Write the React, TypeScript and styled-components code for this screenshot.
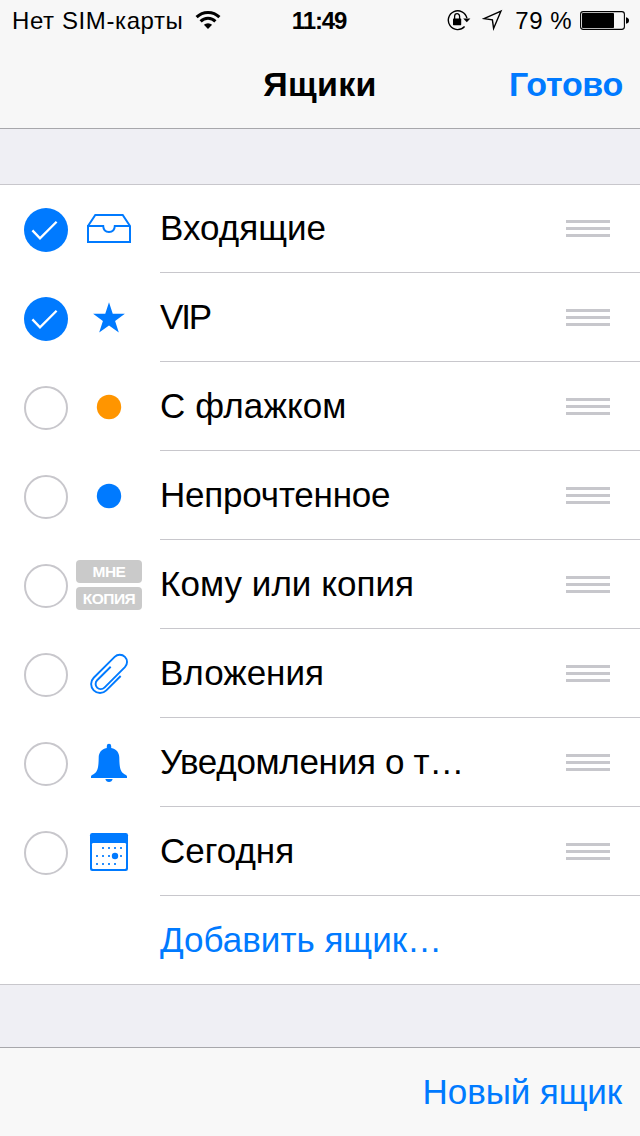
import React from 'react';
import styled, { createGlobalStyle, css } from 'styled-components';

const BLUE = '#007aff';
const LINE = '#c8c7cc';

const GlobalStyle = createGlobalStyle`
  body {
    margin: 0;
    background: #efeff4;
    font-family: 'Liberation Sans', Arial, sans-serif;
    color: #000;
  }
  * { box-sizing: border-box; }
  svg { display: block; flex: none; }
`;

const Screen = styled.div`
  width: 640px;
  height: 1136px;
  display: flex;
  flex-direction: column;
  overflow: hidden;
  background: #efeff4;
`;

const Header = styled.header`
  height: 129px;
  flex: none;
  background: #f7f7f7;
  border-bottom: 1px solid #a7a7ab;
`;

const ThreeColumns = css`
  display: grid;
  grid-template-columns: 1fr auto 1fr;
`;

const StatusBar = styled.div`
  ${ThreeColumns}
  height: 40px;
  padding: 0 11px 0 12px;
  font-size: 24px;
  line-height: 41px;
`;

const StatusGroup = styled.div<{ $end?: boolean }>`
  display: flex;
  align-items: center;
  height: 40px;
  justify-content: ${p => (p.$end ? 'flex-end' : 'flex-start')};
`;

const Text = styled.span<{ $track?: number; $bold?: boolean }>`
  white-space: nowrap;
  letter-spacing: ${p => p.$track ?? 0}px;
  font-weight: ${p => (p.$bold ? 700 : 400)};
`;

const Clock = styled(Text)`
  margin-right: 3px;
`;

const NavBar = styled.div`
  ${ThreeColumns}
  height: 88px;
  padding: 0 17px;
  font-size: 34px;
  line-height: 89px;
`;

const NavAction = styled.button`
  grid-column: 3;
  justify-self: end;
  padding: 0;
  border: 0;
  background: none;
  font: inherit;
  color: ${BLUE};
`;

const NavTitle = styled.h1`
  grid-column: 2;
  margin: 0;
  font: inherit;
`;

const GroupGap = styled.div`
  height: 56px;
  flex: none;
  border-bottom: 1px solid ${LINE};
`;

const List = styled.ul`
  margin: 0;
  padding: 0;
  list-style: none;
  background: #fff;
  border-bottom: 1px solid ${LINE};
`;

const Row = styled.li`
  display: flex;
  height: 89px;
  padding-left: 24px;
  &:first-child { margin-top: -1px; }
  &:last-child { height: 88px; }
`;

const Check = styled.span<{ $on?: boolean }>`
  width: 44px;
  height: 44px;
  margin-top: 24px;
  flex: none;
  border-radius: 50%;
  background: ${p => (p.$on ? BLUE : 'transparent')};
  border: ${p => (p.$on ? '0' : `2px solid ${LINE}`)};
`;

const IconSlot = styled.span`
  width: 82px;
  margin-right: 10px;
  padding-top: 16px;
  flex: none;
  display: flex;
  justify-content: center;
  align-items: flex-start;
`;

const Body = styled.div<{ $last?: boolean }>`
  flex: 1;
  display: flex;
  justify-content: space-between;
  padding-right: 30px;
  font-size: 35px;
  line-height: 87px;
  border-bottom: ${p => (p.$last ? '0' : `1px solid ${LINE}`)};
  color: ${p => (p.$last ? BLUE : '#000')};
`;

const Handle = styled.span`
  width: 44px;
  height: 17px;
  margin-top: 36px;
  display: flex;
  flex-direction: column;
  justify-content: space-between;
`;

const Bar = styled.i`
  height: 3px;
  background: #c7c7cc;
`;

const Badges = styled.span`
  margin-top: 4px;
  display: flex;
  flex-direction: column;
  gap: 4px;
`;

const Badge = styled.span`
  width: 66px;
  height: 23px;
  border-radius: 4px;
  background: #cacaca;
  color: #fff;
  font-size: 15.5px;
  line-height: 24px;
  text-align: center;
`;

const Footer = styled.footer`
  height: 89px;
  margin-top: auto;
  flex: none;
  display: flex;
  justify-content: flex-end;
  padding-right: 18px;
  background: #f8f8f8;
  border-top: 1px solid #a7a7ab;
  font-size: 35px;
  line-height: 87px;
  color: ${BLUE};
`;

const Glyph = ({ children }: { children: React.ReactNode }) => (
  <svg width="70" height="56" viewBox="0 0 70 56" fill="none">{children}</svg>
);

const Tray = () => (
  <Glyph>
    <path d="M14 26 21.3 15H48.7L56 26V42H14V26H29.2C29.4 29.8 31.8 32 35 32S40.6 29.8 40.8 26H56" stroke={BLUE} strokeWidth="2" />
  </Glyph>
);

const Star = () => {
  const points = Array.from({ length: 10 }, (_, i) => {
    const r = i % 2 ? 6.4 : 16.7;
    const a = (i * Math.PI) / 5;
    return `${(35 + r * Math.sin(a)).toFixed(2)},${(30 - r * Math.cos(a)).toFixed(2)}`;
  }).join(' ');
  return <Glyph><polygon points={points} fill={BLUE} /></Glyph>;
};

const Dot = ({ color }: { color: string }) => (
  <Glyph><circle cx="35" cy="29" r="12.2" fill={color} /></Glyph>
);

const Clip = () => (
  <Glyph>
    <path
      transform="rotate(-45)"
      d="M11.1 54.9H-9.2A8.9 8.9 0 0 1-9.2 37.1H20.4A7.25 7.25 0 0 1 20.4 51.6H-8.6A5.15 5.15 0 0 1-8.6 41.3H10.6"
      stroke={BLUE}
      strokeWidth="1.9"
    />
  </Glyph>
);

const Bell = () => (
  <Glyph>
    <path
      d="M32.8 14V12A2.2 2.2 0 0 1 37.2 12V14C42.6 14.9 45.2 18.8 45.3 23.5C45.4 32 46 37.2 49.5 39.6C51.5 41 53 41.3 53 42.6V44H17V42.6C17 41.3 18.5 41 20.5 39.6C24 37.2 24.6 32 24.7 23.5C24.8 18.8 27.4 14.9 32.8 14Z"
      fill={BLUE}
    />
    <path d="M31.4 45H38.6C38.2 47 37 48 35 48S31.8 47 31.4 45Z" fill={BLUE} />
  </Glyph>
);

const Calendar = () => {
  const cells = [[29, 25], [35, 25], [41, 25], [47, 25], [23, 33], [29, 33], [35, 33], [47, 33], [23, 41], [29, 41], [35, 41], [41, 41]];
  return (
    <Glyph>
      <rect x="16" y="10" width="38" height="38" rx="2.2" fill={BLUE} />
      <rect x="18" y="20" width="34" height="26" rx="1.2" fill="#fff" />
      {cells.map(([x, y]) => <rect key={`${x}-${y}`} x={x - 1} y={y - 1} width="2" height="2" fill={BLUE} opacity="0.85" />)}
      <circle cx="41" cy="33" r="3.2" fill={BLUE} />
    </Glyph>
  );
};

const Recipients = () => (
  <Badges>
    <Badge><Text $bold $track={-0.5}>МНЕ</Text></Badge>
    <Badge><Text $bold $track={-0.5}>КОПИЯ</Text></Badge>
  </Badges>
);

const Tick = () => (
  <svg width="44" height="44" viewBox="0 0 44 44" fill="none">
    <path d="M8.4 22.4 16 30.4 32.6 13.8" stroke="#fff" strokeWidth="2.3" />
  </svg>
);

const Wifi = () => (
  <svg width="26" height="20" viewBox="0 0 26 20" fill="none" stroke="#000" strokeWidth="3">
    <path d="M1.6 7.1A16.2 16.2 0 0 1 24.4 7.1" />
    <path d="M5.6 11.4A10.4 10.4 0 0 1 20.4 11.4" />
    <path d="M13 19 8.9 14.8A5.9 5.9 0 0 1 17.1 14.8Z" fill="#000" stroke="none" />
  </svg>
);

const RotationLock = () => (
  <svg width="24" height="22" viewBox="0 0 24 22" fill="none">
    <path d="M17.6 17.6A9.4 9.4 0 1 1 19.9 9.2" stroke="#000" strokeWidth="1.4" />
    <path d="M16.2 9.4H23.4L19.8 13.2Z" fill="#000" />
    <rect x="6" y="9.6" width="8.2" height="6.6" rx="0.6" fill="#000" />
    <path d="M7.6 10V7.4A2.5 2.7 0 0 1 12.6 7.4V10" stroke="#000" strokeWidth="1.3" />
  </svg>
);

const Location = () => (
  <svg width="22" height="22" viewBox="0 0 22 22" fill="none">
    <path d="M19 2 11.6 19.4 10.4 10.8 2 9.6Z" stroke="#000" strokeWidth="1.4" />
  </svg>
);

const Battery = () => (
  <svg width="49" height="20" viewBox="0 0 49 20" fill="none">
    <rect x="0.6" y="1.6" width="43.8" height="17.8" rx="2.6" stroke="#000" strokeWidth="1.1" />
    <rect x="2" y="3" width="32" height="15" rx="0.8" fill="#000" />
    <path d="M46 7.2C48 7.6 49 8.8 49 10.5S48 13.4 46 13.8Z" fill="#000" />
  </svg>
);

const WifiBox = styled.span` margin-left: 12px; `;
const Gap = styled.span<{ $w: number }>` width: ${p => p.$w}px; flex: none; `;

const mailboxes = [
  { name: 'Входящие', icon: <Tray />, on: true },
  { name: 'VIP', icon: <Star />, on: true, track: -2.1 },
  { name: 'С флажком', icon: <Dot color="#ff9500" />, track: 0.1 },
  { name: 'Непрочтенное', icon: <Dot color={BLUE} />, track: -0.2 },
  { name: 'Кому или копия', icon: <Recipients />, track: 0.05 },
  { name: 'Вложения', icon: <Clip /> },
  { name: 'Уведомления о т…', icon: <Bell />, track: -0.3 },
  { name: 'Сегодня', icon: <Calendar /> },
];

export default function App() {
  return (
    <Screen>
      <GlobalStyle />
      <Header>
        <StatusBar>
          <StatusGroup>
            <Text $track={0.6}>Нет SIM-карты</Text>
            <WifiBox><Wifi /></WifiBox>
          </StatusGroup>
          <Clock $bold $track={-1.1}>11:49</Clock>
          <StatusGroup $end>
            <RotationLock />
            <Gap $w={11} />
            <Location />
            <Gap $w={11} />
            <Text $track={0.5}>79 %</Text>
            <Gap $w={8} />
            <Battery />
          </StatusGroup>
        </StatusBar>
        <NavBar>
          <NavTitle><Text $bold $track={0.3}>Ящики</Text></NavTitle>
          <NavAction><Text $bold $track={-0.3}>Готово</Text></NavAction>
        </NavBar>
      </Header>
      <GroupGap />
      <List>
        {mailboxes.map(m => (
          <Row key={m.name}>
            <Check $on={m.on}>{m.on && <Tick />}</Check>
            <IconSlot>{m.icon}</IconSlot>
            <Body>
              <Text $track={m.track}>{m.name}</Text>
              <Handle><Bar /><Bar /><Bar /></Handle>
            </Body>
          </Row>
        ))}
        <Row>
          <Gap $w={136} />
          <Body $last><Text>Добавить ящик…</Text></Body>
        </Row>
      </List>
      <Footer><Text $track={-0.1}>Новый ящик</Text></Footer>
    </Screen>
  );
}
